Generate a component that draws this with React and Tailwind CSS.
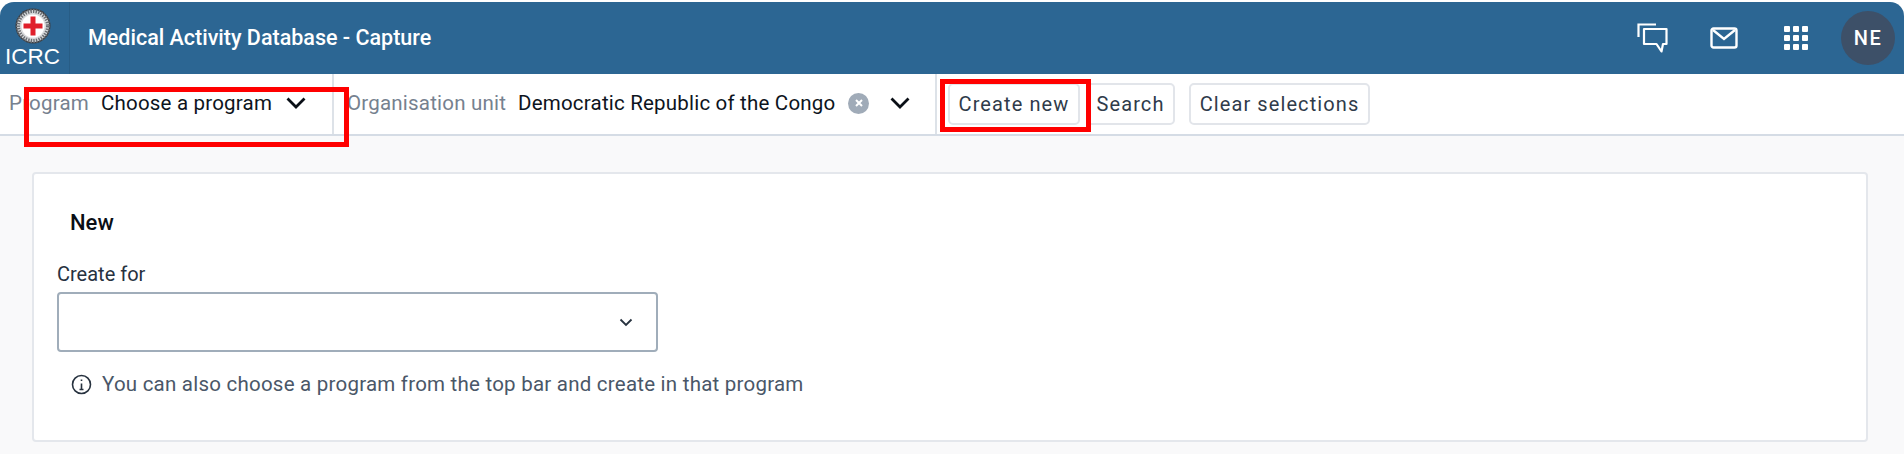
import React from 'react';

const font = { fontFamily: 'Roboto, sans-serif' };

function Logo() {
  return (
    <svg width="36" height="36" viewBox="0 0 36 36">
      <circle cx="18" cy="18" r="17.5" fill="#3b3f45" />
      <circle cx="18" cy="18" r="16" fill="#d8dadc" />
      <circle cx="18" cy="18" r="15" fill="none" stroke="#6a6e73" strokeWidth="4" strokeDasharray="1.500 1.200" />
      <circle cx="18" cy="18" r="11.500" fill="#ffffff" />
      <path d="M15.500 8.500h5V15.500h7v5h-7v7h-5v-7h-7v-5h7z" fill="#e0202c" />
    </svg>
  );
}

function Chevron() {
  return (
    <svg width="20" height="12" viewBox="0 0 20 12" fill="none" stroke="#0a0f16" strokeWidth="2.800">
      <path d="M1.500 1.500l8.500 8.500 8.500-8.500" />
    </svg>
  );
}

function TopButton({ children, className }) {
  return (
    <button className={`h-[42px] rounded-[5px] border-2 border-[#e2e5ea] bg-white text-[20px] tracking-[1.100px] text-[#2f3b4a] ${className}`}>
      {children}
    </button>
  );
}

export default function App() {
  return (
    <div style={font} className="relative h-[454px] w-[1904px] overflow-hidden bg-white">
      {/* Header */}
      <div className="mt-[2px] flex h-[72px] items-center rounded-t-[14px] bg-[#2c6693] text-white">
        <div className="flex h-full w-[70px] flex-col items-start border-r border-[#285d86] pt-[6px] pl-[5px]">
          <span className="ml-[10px] flex"><Logo /></span>
          <span className="text-[22.500px] leading-[26px] font-light" style={{ fontFamily: '"Liberation Sans", sans-serif' }}>ICRC</span>
        </div>
        <span className="ml-[18px] text-[21.500px] font-medium">Medical Activity Database - Capture</span>
        <div className="ml-auto flex items-center">
          <svg width="32" height="32" viewBox="0 0 32 32" fill="none" stroke="#fff" strokeWidth="2.200" className="mr-[42px]">
            <path d="M2.500 15V2.500H20" />
            <path d="M8 7h22.500v15H27l-1.500 7.500L20.500 22H8z" strokeLinejoin="round" />
          </svg>
          <svg width="28" height="22" viewBox="0 0 28 22" fill="none" stroke="#fff" strokeWidth="2.400" className="mr-[46px]">
            <rect x="1.500" y="1.500" width="25" height="19" rx="2" />
            <path d="M3 3l11 9 11-9" />
          </svg>
          <div className="mr-[33px] grid grid-cols-3 gap-[3px]">
            {[0, 1, 2, 3, 4, 5, 6, 7, 8].map((i) => (
              <div key={i} className="h-[6px] w-[6px] rounded-[1px] bg-white" />
            ))}
          </div>
          <div className="mr-[9px] flex h-[54px] w-[54px] items-center justify-center rounded-full bg-[#3d5068] text-[20px] font-medium tracking-[1.500px]">NE</div>
        </div>
      </div>

      {/* Toolbar */}
      <div className="flex h-[62px] items-start border-b-2 border-[#d5dce5] bg-white text-[20.500px] tracking-[0.2px]">
        <div className="flex h-full w-[334px] items-center border-r-2 border-[#dde2e8] pb-[2px] pl-[9px]">
          <span className="text-[#76818f]">Program</span>
          <span className="ml-[12px] text-[#0d1420]">Choose a program</span>
          <span className="ml-[14px] flex"><Chevron /></span>
        </div>
        <div className="flex h-full w-[603px] items-center border-r-2 border-[#dde2e8] pb-[2px] pl-[13px]">
          <span className="text-[#76818f]">Organisation unit</span>
          <span className="ml-[12px] text-[#0d1420]">Democratic Republic of the Congo</span>
          <span className="ml-[13px] flex h-[21px] w-[21px] items-center justify-center rounded-full bg-[#a0abb8]">
            <svg width="10" height="10" viewBox="0 0 10 10" fill="none" stroke="#fff" strokeWidth="2">
              <path d="M2 2l6 6M8 2L2 8" />
            </svg>
          </span>
          <span className="ml-[21px] flex"><Chevron /></span>
        </div>
        <div className="flex items-center pt-[9px] pl-[11px]">
          <TopButton className="w-[132px]">Create new</TopButton>
          <TopButton className="ml-[6px] w-[89px]">Search</TopButton>
          <TopButton className="ml-[14px] w-[181px]">Clear selections</TopButton>
        </div>
      </div>

      {/* Body */}
      <div className="h-[318px] bg-[#f9f9fa] pt-[36px] pr-[36px] pl-[32px]">
        <div className="h-[270px] rounded-[4px] border-2 border-[#e4e7ec] bg-white pt-[35px] pl-[23px]">
          <h2 className="ml-[13px] text-[22px] leading-[28px] font-medium text-[#0a0f16]">New</h2>
          <div className="mt-[25px] text-[20px] leading-[24px] text-[#27323f]">Create for</div>
          <div className="mt-[6px] flex h-[60px] w-[601px] items-center justify-end rounded-[4px] border-2 border-[#a0adba] bg-white pr-[23px]">
            <svg width="14" height="9" viewBox="0 0 14 9" fill="none" stroke="#27323f" strokeWidth="1.800">
              <path d="M1.500 1.500L7 7l5.500-5.500" />
            </svg>
          </div>
          <div className="mt-[20px] ml-[14px] flex items-center text-[20.500px] leading-[24px] tracking-[0.23px] text-[#4a5768]">
            <svg width="21" height="21" viewBox="0 0 21 21" fill="none" stroke="#27323f" strokeWidth="1.600">
              <circle cx="10.500" cy="10.500" r="9" />
              <path d="M10.500 9.500v6M8.500 15.500h4M10.500 5.500v1.500" />
            </svg>
            <span className="ml-[10px]">You can also choose a program from the top bar and create in that program</span>
          </div>
        </div>
      </div>

      {/* Red annotation boxes */}
      <div className="absolute top-[87px] left-[24px] h-[60px] w-[325px] border-[5px] border-[#ff0000]" />
      <div className="absolute top-[79px] left-[940px] h-[53px] w-[151px] border-[5px] border-[#ff0000]" />
    </div>
  );
}
